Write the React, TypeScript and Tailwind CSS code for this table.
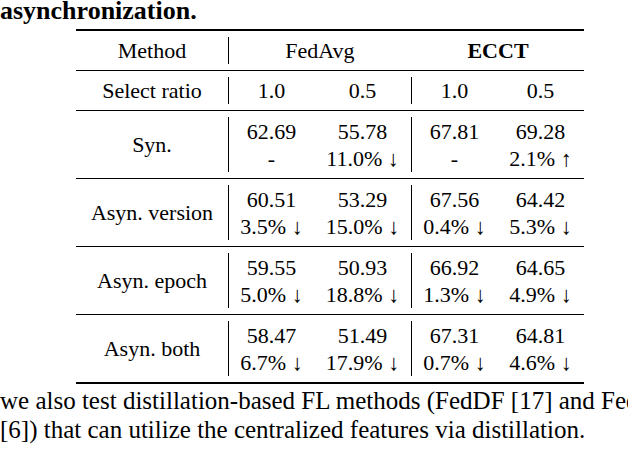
import React from "react";

type Row = {
  label: string;
  cells: [string, string][];
};

const rows: Row[] = [
  { label: "Syn.", cells: [["62.69", "-"], ["55.78", "11.0% ↓"], ["67.81", "-"], ["69.28", "2.1% ↑"]] },
  { label: "Asyn. version", cells: [["60.51", "3.5% ↓"], ["53.29", "15.0% ↓"], ["67.56", "0.4% ↓"], ["64.42", "5.3% ↓"]] },
  { label: "Asyn. epoch", cells: [["59.55", "5.0% ↓"], ["50.93", "18.8% ↓"], ["66.92", "1.3% ↓"], ["64.65", "4.9% ↓"]] },
  { label: "Asyn. both", cells: [["58.47", "6.7% ↓"], ["51.49", "17.9% ↓"], ["67.31", "0.7% ↓"], ["64.81", "4.6% ↓"]] },
];

const grid = "grid grid-cols-[152px_1px_85px_97px_1px_85px_87px]";

function Bar() {
  return <div className="my-[6px] w-px self-stretch bg-black" />;
}

function Cell({ lines }: { lines: string[] }) {
  return (
    <div className="flex flex-col items-center justify-center whitespace-nowrap leading-[27px]">
      {lines.map((l, i) => (
        <span key={i}>{l}</span>
      ))}
    </div>
  );
}

export default function App() {
  return (
    <div
      className="h-[450px] w-[628px] overflow-hidden bg-white text-black"
      style={{ fontFamily: '"Liberation Serif", "Times New Roman", serif' }}
    >
      <div className="h-[29px] whitespace-nowrap text-[26px] font-bold leading-[22px]">asynchronization.</div>

      <div className="ml-[76px] w-[508px] text-[22px]">
        <div className="h-[2px] bg-black" />
        <div className={`${grid} h-[39px]`}>
          <Cell lines={["Method"]} />
          <Bar />
          <div className="col-span-2 flex items-center justify-center">FedAvg</div>
          <div />
          <div className="col-span-2 flex items-center justify-center font-bold">ECCT</div>
        </div>
        <div className="h-px bg-black" />
        <div className={`${grid} h-[39px]`}>
          <Cell lines={["Select ratio"]} />
          <Bar />
          <Cell lines={["1.0"]} />
          <Cell lines={["0.5"]} />
          <Bar />
          <Cell lines={["1.0"]} />
          <Cell lines={["0.5"]} />
        </div>
        {rows.map((r) => (
          <React.Fragment key={r.label}>
            <div className="h-px bg-black" />
            <div className={`${grid} h-[67px]`}>
              <Cell lines={[r.label]} />
              <Bar />
              <Cell lines={r.cells[0]} />
              <Cell lines={r.cells[1]} />
              <Bar />
              <Cell lines={r.cells[2]} />
              <Cell lines={r.cells[3]} />
            </div>
          </React.Fragment>
        ))}
        <div className="h-[2px] bg-black" />
      </div>

      <div className="mt-[2px] whitespace-nowrap text-[25px] leading-[29px]">
        <p>we also test distillation-based FL methods (FedDF [17] and FedBE</p>
        <p>[6]) that can utilize the centralized features via distillation.</p>
      </div>
    </div>
  );
}
